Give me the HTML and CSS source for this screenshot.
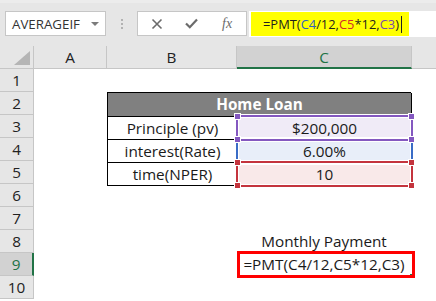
FILE: index.html
```html
<!DOCTYPE html>
<html>
<head>
    <meta charset="utf-8">
    <meta name="viewport" content="width=device-width, initial-scale=1.0">
    <title>PMT</title>
    <link rel="stylesheet" href="styles.css">
</head>
<body>
<div class="ribbon">
    <div class="namebox">
        <span class="nb-text">AVERAGEIF</span>
        <span class="nb-drop"></span>
    </div>
    <div class="grip"><i></i><i></i><i></i></div>
    <div class="fbtns">
        <svg class="ic-x" width="12" height="12" viewBox="0 0 12 12"><path d="M1.5 1.5 L10.5 10.5 M10.5 1.5 L1.5 10.5" stroke="#6b6b6b" stroke-width="1.6" fill="none"/></svg>
        <svg class="ic-ok" width="13" height="11" viewBox="0 0 13 11"><path d="M1 5.5 L4.8 9.2 L12 1.6" stroke="#6b6b6b" stroke-width="2.2" fill="none"/></svg>
        <span class="fx">fx</span>
    </div>
    <div class="fbar">
        <div class="fbar-hl">=PMT(<span class="ref-b">C4</span>/12,<span class="ref-r">C5</span>*12,<span class="ref-p">C3</span>)<span class="caret"></span></div>
    </div>
</div>

<div class="sheet-head">
    <div class="corner"><span class="tri"></span></div>
    <div class="colhd col-a">A</div>
    <div class="colhd col-b">B</div>
    <div class="colhd col-c sel">C</div>
    <div class="colhd col-d"></div>
</div>

<div class="sheet-body">
    <div class="rowhds">
        <div class="rowhd">1</div>
        <div class="rowhd">2</div>
        <div class="rowhd">3</div>
        <div class="rowhd">4</div>
        <div class="rowhd">5</div>
        <div class="rowhd">6</div>
        <div class="rowhd">7</div>
        <div class="rowhd">8</div>
        <div class="rowhd sel">9</div>
        <div class="rowhd">10</div>
    </div>
    <div class="cells">
        <div class="loan">
            <div class="cell title">Home Loan</div>
            <div class="cell">Principle (pv)</div>
            <div class="cell val c3">$200,000<span class="hl hl-p"><i class="h tl"></i><i class="h tr"></i><i class="h bl"></i><i class="h br"></i></span></div>
            <div class="cell">interest(Rate)</div>
            <div class="cell val c4">6.00%<span class="hl hl-b"></span></div>
            <div class="cell">time(NPER)</div>
            <div class="cell val c5">10<span class="hl hl-r"><i class="h tl"></i><i class="h tr"></i><i class="h bl"></i><i class="h br"></i></span></div>
        </div>
        <div class="cell label-c8">Monthly Payment</div>
        <div class="cell active-c9">=PMT(C4/12,C5*12,C3)<span class="fill-handle"></span></div>
    </div>
</div>
</body>
</html>
```

FILE: styles.css
```css
html, body{
    margin: 0;
    padding: 0;
    height: 100%;
}
body{
    background: #fff;
    font-family: "Open Sans", "Lato", sans-serif;
    color: #1a1a1a;
    overflow: hidden;
}

/* barre du haut : zone de nom + formule */
.ribbon{
    display: flex;
    align-items: flex-start;
    height: 46px;
    padding: 11px 0 0 5px;
    box-sizing: border-box;
    background: #e6e6e6;
    border-top: 3px solid #ececec;
    padding-top: 8px;
}
.namebox{
    display: flex;
    align-items: center;
    justify-content: space-between;
    width: 101px; height: 25px;
    padding: 0 6px 0 6px;
    box-sizing: border-box;
    background: #fff;
    border: 1px solid #c6c6c6;
}
.nb-text{
    font-size: 13.3px;
    color: #333;
}
.nb-drop{
    width: 0; height: 0;
    border-left: 4px solid transparent;
    border-right: 4px solid transparent;
    border-top: 4px solid #7b7b7b;
}
.grip{
    display: flex;
    flex-direction: column;
    align-items: center;
    gap: 2px;
    width: 31px;
    padding-top: 8px;
}
.grip i{
    width: 2px; height: 2px;
    background: #b2b2b2;
}
.fbtns{
    display: flex;
    align-items: center;
    width: 110px; height: 25px;
    box-sizing: border-box;
    background: #fff;
    border: 1px solid #c6c6c6;
    padding-left: 13px;
}
.ic-ok{ margin-left: 22px; }
.fx{
    margin-left: 24px;
    font-family: "Liberation Serif", serif;
    font-style: italic;
    font-size: 14px;
    color: #6b6b6b;
}
.fbar{
    flex: 1;
    height: 26px;
    margin-left: 2px;
    padding: 1px 0 0 2px;
    box-sizing: border-box;
    background: #fff;
}
.fbar-hl{
    display: flex;
    align-items: center;
    width: 158px; height: 24px;
    padding-left: 12px;
    box-sizing: border-box;
    background: #ffff00;
    font-size: 12.9px;
    color: #1f1f1f;
}
.ref-b{ color: #2f62c0; }
.ref-r{ color: #d12b2b; }
.ref-p{ color: #7a48b0; }
.caret{
    width: 1px; height: 17px;
    margin-left: 2px;
    background: #222;
}

/* en-têtes colonnes */
.sheet-head{
    display: flex;
    height: 23px;
    background: #e6e6e6;
}
.corner, .colhd{
    box-sizing: border-box;
    border-right: 1px solid #c6c6c6;
    border-bottom: 1px solid #c6c6c6;
    text-align: center;
    font-size: 15.3px;
    line-height: 23px;
    color: #222;
}
.corner{
    position: relative;
    width: 34px;
}
.corner .tri{
    position: absolute;
    right: 3px; bottom: 3px;
    width: 16px; height: 14px;
    background: #b5b5b5;
    clip-path: polygon(100% 0, 100% 100%, 0 100%);
}
.col-a{ width: 73px; }
.col-b{ width: 130px; }
.col-c{ width: 175px; }
.col-d{ flex: 1; border-right: none; }
.colhd.sel{
    background: #d2d2d2;
    color: #217346;
    border-bottom: 2px solid #217346;
}

/* en-têtes lignes + cellules */
.sheet-body{
    display: flex;
}
.rowhds{
    display: flex;
    flex-direction: column;
    width: 34px;
    background: #e6e6e6;
}
.rowhd{
    height: 23px;
    box-sizing: border-box;
    border-right: 1px solid #c6c6c6;
    border-bottom: 1px solid #c6c6c6;
    text-align: center;
    font-size: 15.3px;
    line-height: 23px;
    color: #222;
}
.rowhd.sel{
    background: #d2d2d2;
    color: #217346;
    border-right: 2px solid #217346;
}
.cells{
    flex: 1;
    display: grid;
    grid-template-columns: 73px 130px 174px 1fr;
    grid-template-rows: repeat(10, 23px);
}
.cell{
    font-size: 15.3px;
    line-height: 22px;
    text-align: center;
    white-space: nowrap;
}

/* tableau Home Loan */
.loan{
    grid-column: 2 / 4;
    grid-row: 2 / 6;
    align-self: start;
    display: grid;
    grid-template-columns: 130px 174px;
    grid-template-rows: 24px 23px 23px 23px;
    border-top: 1px solid #000;
    border-left: 1px solid #000;
}
.loan .cell{
    position: relative;
    box-sizing: border-box;
    border-right: 1px solid #000;
    border-bottom: 1px solid #000;
}
.loan .title{
    grid-column: 1 / 3;
    background: #808080;
    color: #fff;
    font-weight: bold;
    line-height: 23px;
}
.c3{ background: #f0ebf7; }
.c4{ background: #e8eef9; }
.c5{ background: #f9e9e9; }

/* cadres de références colorés */
.hl{
    position: absolute;
    top: -2px; left: -2px; right: -2px; bottom: -2px;
    border: 2px solid;
    box-shadow: 0 0 0 1px #fff, inset 0 0 0 1px #fff;
}
.hl-p{ border-color: #8458c0; z-index: 2; }
.hl-b{ border-color: #3a6cc6; z-index: 1; }
.hl-r{ border-color: #c4343d; z-index: 2; }
.hl .h{
    position: absolute;
    width: 5px; height: 5px;
    border: 1px solid #fff;
    z-index: 3;
}
.hl-p .h{ background: #8458c0; }
.hl-r .h{ background: #c4343d; }
.h.tl{ top: -4px; left: -4px; }
.h.tr{ top: -4px; right: -4px; }
.h.bl{ bottom: -4px; left: -4px; }
.h.br{ bottom: -4px; right: -4px; }

.label-c8{
    grid-column: 3;
    grid-row: 8;
}
.active-c9{
    position: relative;
    grid-column: 3;
    grid-row: 9;
}
.active-c9::after{
    content: "";
    position: absolute;
    top: -2px; left: 0; right: -4px; bottom: -2px;
    border: 3px solid #ff0000;
}
.fill-handle{
    position: absolute;
    right: -3px; bottom: -2px;
    width: 4px; height: 4px;
    background: #217346;
}
```
